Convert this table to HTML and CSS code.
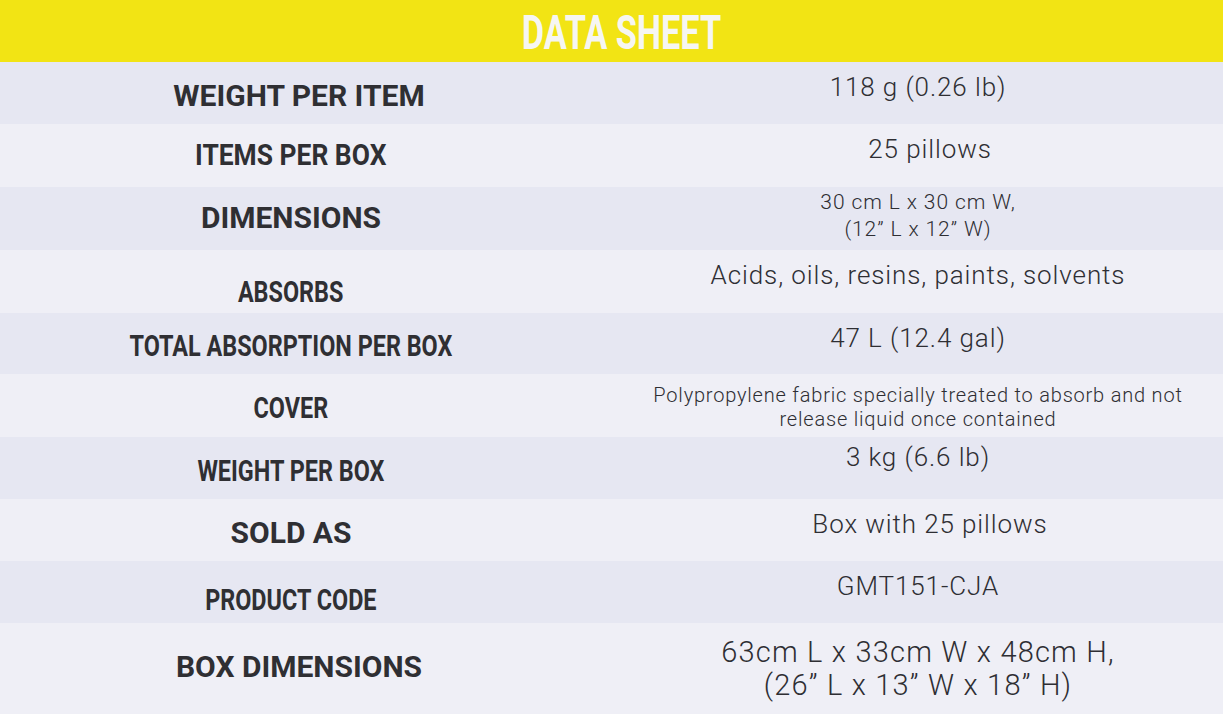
FILE: index.html
```html
<!DOCTYPE html>
<html lang="en">
<head>
<meta charset="utf-8">
<title>Data Sheet</title>
<link rel="stylesheet" href="styles.css">
</head>
<body>
<div class="sheet">
  <div class="title"><h1 class="title-text">DATA SHEET</h1></div>

  <div class="row dark">
    <div class="label shift"><span class="wide">WEIGHT PER ITEM</span></div>
    <div class="value">118 g (0.26 lb)</div>
  </div>
  <div class="row light h63">
    <div class="label up"><span class="semi">ITEMS PER BOX</span></div>
    <div class="value right">25 pillows</div>
  </div>
  <div class="row dark h63">
    <div class="label up"><span class="wide">DIMENSIONS</span></div>
    <div class="value small">30 cm L x 30 cm W,<br>(12” L x 12” W)</div>
  </div>
  <div class="row light h63">
    <div class="label down2"><span class="narrow">ABSORBS</span></div>
    <div class="value">Acids, oils, resins, paints, solvents</div>
  </div>
  <div class="row dark short">
    <div class="label"><span class="narrow">TOTAL ABSORPTION PER BOX</span></div>
    <div class="value">47 L (12.4 gal)</div>
  </div>
  <div class="row light h63">
    <div class="label"><span class="narrow">COVER</span></div>
    <div class="value medium">Polypropylene fabric specially treated to absorb and not<br>release liquid once contained</div>
  </div>
  <div class="row dark">
    <div class="label"><span class="narrow">WEIGHT PER BOX</span></div>
    <div class="value high">3 kg (6.6 lb)</div>
  </div>
  <div class="row light">
    <div class="label"><span class="wide">SOLD AS</span></div>
    <div class="value right">Box with 25 pillows</div>
  </div>
  <div class="row dark">
    <div class="label down1"><span class="narrow">PRODUCT CODE</span></div>
    <div class="value">GMT151-CJA</div>
  </div>
  <div class="row light tall">
    <div class="label last shift"><span class="wide">BOX DIMENSIONS</span></div>
    <div class="value large">63cm L x 33cm W x 48cm H,<br>(26” L x 13” W x 18” H)</div>
  </div>
</div>
</body>
</html>
```

FILE: styles.css
```css
html, body {
  margin: 0;
  padding: 0;
  background: #eff0f6;
}

.sheet {
  width: 1223px;
  height: 714px;
  overflow: hidden;
  font-family: Roboto, "Liberation Sans", sans-serif;
  color: #303035;
}

.title {
  height: 62px;
  background: #f2e414;
  display: flex;
  justify-content: center;
  align-items: flex-start;
  padding-left: 20px;
  box-sizing: border-box;
}

.title-text {
  margin: 0;
  display: inline-block;
  font-size: 49px;
  line-height: 65px;
  font-weight: 700;
  color: #f6f6f2;
  transform: scaleX(0.70);
}

.row {
  display: grid;
  grid-template-columns: 582px 1fr;
  column-gap: 31px;
  height: 62px;
  box-sizing: border-box;
}

.row.dark { background: #e6e7f2; }
.row.light { background: #efeff6; }
.row.h63 { height: 63px; }
.row.short { height: 61px; }
.row.tall { height: 91px; }

.label {
  display: flex;
  justify-content: center;
  align-items: center;
  padding-top: 4px;
  font-weight: 700;
  font-size: 30px;
  color: #2f2f33;
}

.label.shift { padding-left: 16px; }
.label.up { padding-top: 0; padding-bottom: 2px; }
.label.down1 { padding-top: 14px; }
.label.down2 { padding-top: 20px; }
.label.last { padding-top: 0; padding-bottom: 5px; }

.wide {
  display: inline-block;
  white-space: nowrap;
}

.semi {
  display: inline-block;
  white-space: nowrap;
  transform: scaleX(0.88);
}

.narrow {
  display: inline-block;
  white-space: nowrap;
  transform: scaleX(0.78);
}

.value {
  text-align: center;
  font-weight: 300;
  font-size: 26px;
  line-height: 30px;
  letter-spacing: 0.9px;
  padding-top: 10px;
  color: #2e2e33;
  white-space: nowrap;
}

.value.right { padding-left: 24px; }
.value.high { padding-top: 5px; }

.value.small {
  font-size: 21px;
  line-height: 27px;
  letter-spacing: 0.9px;
  padding-top: 2px;
}

.value.medium {
  font-size: 20px;
  line-height: 24px;
  letter-spacing: 0.8px;
  padding-top: 9px;
}

.value.large {
  font-size: 29px;
  line-height: 33px;
  letter-spacing: 1.2px;
  padding-top: 13px;
}
```
